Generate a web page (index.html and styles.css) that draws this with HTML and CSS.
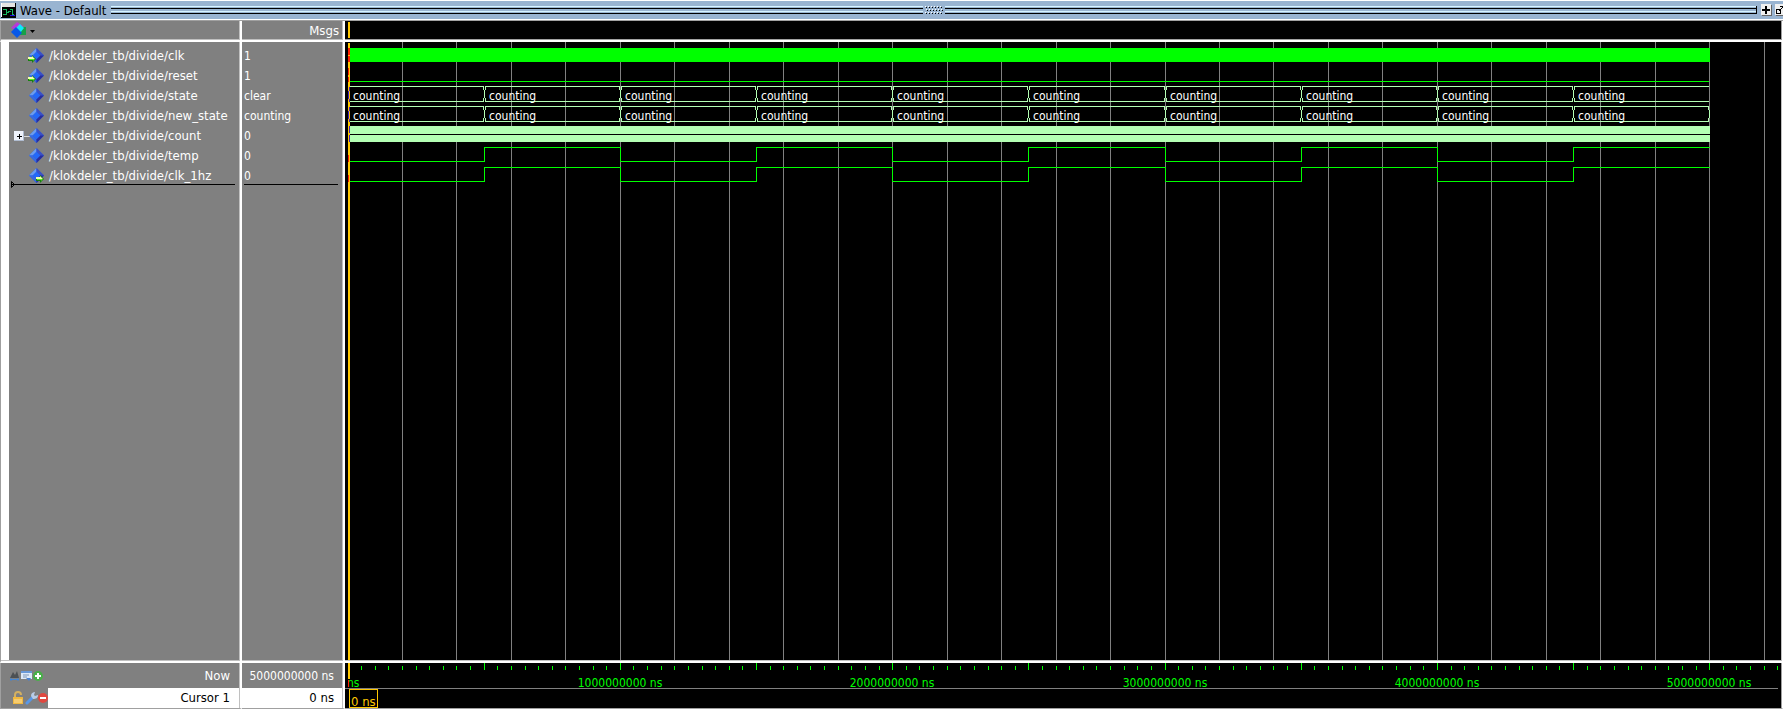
FILE: index.html
```html
<!DOCTYPE html>
<html lang="en">
<head>
<meta charset="utf-8">
<title>Wave - Default</title>
<link rel="stylesheet" href="styles.css">
</head>
<body>
<svg class="defs" width="0" height="0" aria-hidden="true">
  <symbol id="gem" viewBox="0 0 16 16">
    <path d="M8 0 0 8l8 8 8-8z" fill="#2458dc"/>
    <path d="M8 0 0 8h4l4-4z" fill="#6c9cf0"/>
    <path d="M8 0l8 8h-4L8 4z" fill="#3c50c4"/>
    <path d="M0 8l8 8v-4L4 8z" fill="#3a6ae0"/>
    <path d="M16 8l-8 8v-4l4-4z" fill="#2a2c9c"/>
    <path d="M8 4 4 8l4 4 4-4z" fill="#2468f8"/>
  </symbol>
  <symbol id="arrow" viewBox="0 0 8 8">
    <path d="M0 2h4V0l4 4-4 4V6H0z" fill="#188010"/>
    <path d="M0 2h4V1l3 3H0z" fill="#f4ffb0"/>
    <path d="M1 4h6L5 6V5H1z" fill="#58f020"/>
  </symbol>
</svg>

<main class="window">
  <header class="titlebar">
    <svg class="app-icon" width="15" height="15" viewBox="0 0 15 15" shape-rendering="crispEdges">
      <path d="M0 0h15v15H0z" fill="#000"/><path d="M0 0h14v4H0z" fill="#e4e4e4"/><path d="M0 0h1v14H0z" fill="#fff"/>
      <path d="M2 6.500h3v3h3M2 11.500h3v-2M9 6.500h2v5h2M7 8.500h3" fill="none" stroke="#18b860"/>
      <path d="M9 12.500h5" stroke="#2010e0"/>
    </svg>
    <h1 class="title">Wave - Default</h1>
    <div class="groove"></div>
    <svg class="grip" width="22" height="9" viewBox="0 0 22 9" shape-rendering="crispEdges">
      <path d="M2 .5h18M3 3.500h18M2 6.500h18" stroke="#fff" stroke-dasharray="1 2"/>
      <path d="M3 1.500h18M4 4.500h18M3 7.500h18" stroke="#000" stroke-dasharray="1 2"/>
    </svg>
    <div class="groove groove-end"></div>
    <button class="tool" aria-label="Maximize"><svg width="10" height="10" viewBox="0 0 10 10"><path d="M5 1v8M1 5h8" stroke="#000" stroke-width="2"/></svg></button>
    <button class="tool" aria-label="Undock"><svg width="10" height="10" viewBox="0 0 10 10" shape-rendering="crispEdges"><path d="M1.500 4.500h4v4h-4zM4 6l4-4M5 1.500h4v4" fill="none" stroke="#000"/></svg></button>
  </header>

  <section class="names-head">
    <button class="menu" aria-label="Signal options">
      <svg width="27" height="17" viewBox="0 0 27 17">
        <path d="M1 6 7 0l6 4-3 5z" fill="#b838d8"/><path d="M8 5h8v8H8z" fill="#18a048"/>
        <path d="M10 2l4 4-4 5-5-4z" fill="#10e8f8"/><path d="M6 5l6 6-5 5-6-6z" fill="#0858e8"/>
        <path d="M20 8h5l-2.500 3z" fill="#000"/>
      </svg>
    </button>
  </section>
  <section class="values-head">Msgs</section>
  <section class="wave-head"><i class="cursor-mark"></i></section>

  <section class="names">
    <ul class="list">
      <li class="signal"><svg class="gem"><use href="#gem" x="1" y="0" width="15" height="15"/><use href="#arrow" x="0" y="7" width="8" height="8"/></svg>/klokdeler_tb/divide/clk</li>
      <li class="signal"><svg class="gem"><use href="#gem" x="1" y="0" width="15" height="15"/><use href="#arrow" x="0" y="7" width="8" height="8"/></svg>/klokdeler_tb/divide/reset</li>
      <li class="signal"><svg class="gem"><use href="#gem" x="1" y="0" width="15" height="15"/></svg>/klokdeler_tb/divide/state</li>
      <li class="signal"><svg class="gem"><use href="#gem" x="1" y="0" width="15" height="15"/></svg>/klokdeler_tb/divide/new_state</li>
      <li class="signal"><button class="expand" aria-label="Expand count"><svg width="16" height="10" viewBox="0 0 16 10" shape-rendering="crispEdges"><path d="M0 0h10v10H0z" fill="#eef2fa"/><path d="M0 9.500h10M9.500 0v10" stroke="#b0bcd0"/><path d="M3 5.500h5M5.500 3v5" stroke="#000"/><path d="M10 5.500h6" stroke="#d8d8d8"/></svg></button><svg class="gem"><use href="#gem" x="1" y="0" width="15" height="15"/></svg>/klokdeler_tb/divide/count</li>
      <li class="signal"><svg class="gem"><use href="#gem" x="1" y="0" width="15" height="15"/></svg>/klokdeler_tb/divide/temp</li>
      <li class="signal"><svg class="gem"><use href="#gem" x="1" y="0" width="15" height="15"/><use href="#arrow" x="8" y="7" width="8" height="8"/></svg>/klokdeler_tb/divide/clk_1hz</li>
    </ul>
    <div class="insert"><svg width="4" height="7" viewBox="0 0 4 7"><path d="M.5.5v6l3-3z" fill="none" stroke="#000"/></svg></div>
  </section>
  <section class="values">
    <ul class="list">
      <li>1</li><li>1</li><li>clear</li><li>counting</li><li>0</li><li>0</li><li>0</li>
    </ul>
    <div class="insert"></div>
  </section>
  <section class="wave"><svg id="wave" class="plot" role="img" aria-label="Waveforms"></svg></section>

  <section class="names-foot">
    <div class="foot-row">
      <svg width="36" height="12" viewBox="0 0 36 12">
        <path d="M1 8l3-6 2 3 2-4 2 7z" fill="#4c5054"/><path d="M1 9.500h9M2 8v3M9 8v3" stroke="#4484d0" fill="none"/>
        <path d="M12 1h11v8H12z" fill="#dce8f8"/><path d="M12 1h11v2H12z" fill="#6898d8"/><path d="M14 5h6M14 7h4" stroke="#8098b8"/><path d="M17 8h5l-2 3z" fill="#4880d0"/>
        <circle cx="29" cy="6" r="5" fill="#48b048"/><path d="M29 3v6M26 6h6" stroke="#fff" stroke-width="2"/>
      </svg>
      <span>Now</span>
    </div>
    <div class="foot-row cursor-row">
      <svg width="36" height="14" viewBox="0 0 36 14">
        <path d="M3 7V4a3 3 0 0 1 6 0" fill="none" stroke="#d4b060" stroke-width="2"/><path d="M1 6h10v7H1z" fill="#f0b840"/><path d="M2 9h8M2 11h8" stroke="#fce0a0"/>
        <path d="M15 12l6-6" stroke="#5898e8" stroke-width="3" stroke-linecap="round"/><path d="M19 5c0-3 2-4 4-4l-1 3 1 1 3-1c0 3-2 4-5 4z" fill="#b8cce8"/>
        <circle cx="31" cy="7" r="5" fill="#e04840"/><path d="M28 7h6" stroke="#fff" stroke-width="2"/>
      </svg>
      <span class="cursor-name">Cursor 1</span>
    </div>
  </section>
  <section class="values-foot">
    <div class="foot-row now-value">5000000000 ns</div>
    <div class="foot-row cursor-value">0 ns</div>
  </section>
  <section class="wave-foot"><svg id="ruler" class="plot" role="img" aria-label="Time ruler"></svg></section>
</main>
<script src="wave.js"></script>
</body>
</html>
```
FILE: styles.css
```css
* { box-sizing: border-box; }

body {
  margin: 0;
  background: #fff;
  color: #fff;
  font: 12px/20px "DejaVu Sans Condensed", "DejaVu Sans", sans-serif;
  overflow: hidden;
}

.defs { position: absolute; }

.window {
  display: grid;
  grid-template: 21px 21px 1fr 46px / 242px 103px 1fr;
  height: 100vh;
}

.titlebar {
  grid-column: 1 / -1;
  display: flex;
  align-items: flex-start;
  padding: 2px 0 0 1px;
  min-width: 0;
  overflow: hidden;
  background: #99b4d1;
  border-top: 1px solid #fff;
  border-bottom: 1px solid #a0a0a0;
  box-shadow: inset 0 -1px #fff;
  color: #000;
}

.app-icon, .tool, .grip { flex: none; }

.title {
  margin: -2px 5px 0 4px;
  font-size: 13px;
  font-weight: normal;
  line-height: 20px;
  white-space: nowrap;
}

.groove {
  flex: 812 1 0;
  height: 8px;
  margin-top: 3px;
  background: linear-gradient(#d7f4ff 0 1px, #99b4d1 1px 2px, #000 2px 3px, #99b4d1 3px 5px, #d7f4ff 5px 6px, #99b4d1 6px 7px, #000 7px 8px);
}

.groove-end { flex-grow: 811; border-right: 1px solid #000; }
.grip { margin-top: 3px; }

.tool {
  width: 10px;
  height: 11px;
  margin-left: 4px;
  padding: 0;
  border: 0;
  background: #f0f0f0;
  box-shadow: 1px 1px #666;
  line-height: 0;
}
.tool:first-of-type { margin-top: 1px; }
.tool:last-of-type { margin: 1px -2px 0 4px; }

.names-head, .values-head, .names, .values, .names-foot, .values-foot {
  background: #808080;
  border-right: 2px solid #fff;
  box-shadow: inset -1px 0 #c0c0c0;
}

.names-head, .names, .names-foot { border-left: 1px solid #a0a0a0; }

.names-head, .values-head, .wave-head { border-bottom: 2px solid #fff; box-shadow: inset -1px -1px #c0c0c0; }

.values-head { padding-right: 4px; font-size: 13px; line-height: 20px; text-align: right; }

.menu { padding: 1px 0 0 9px; border: 0; background: none; line-height: 0; }

.wave-head, .wave, .wave-foot {
  min-width: 0;
  background: #000;
  border-right: 1px solid #fff;
  box-shadow: inset -1px 0 #a0a0a0;
}

.wave-head { padding: 1px 3px; box-shadow: inset -1px -1px #a0a0a0; }
.cursor-mark { display: block; width: 2px; height: 16px; background: #ffc800; }

.names, .values, .wave { min-height: 0; border-bottom: 2px solid #fff; box-shadow: inset -1px -1px #c0c0c0; }
.wave, .wave-foot { overflow: hidden; padding-right: 1px; }
.wave { padding-bottom: 1px; }

.names { padding-left: 8px; background: linear-gradient(90deg, #fff 8px, #808080 8px); }
.values { padding-left: 2px; }

.list { margin: 0 0 -2px; padding: 4px 0 0; list-style: none; }
.list li { height: 20px; white-space: nowrap; }

.list .signal { display: flex; align-items: center; padding-left: 19px; font-size: 13px; }
.gem { flex: none; width: 17px; height: 16px; margin-right: 4px; }
.expand { width: 16px; height: 10px; margin-left: -14px; margin-right: -2px; padding: 0; border: 0; background: none; line-height: 0; }

.insert {
  display: flex;
  align-items: center;
  height: 1px;
  margin: 0 5px 0 2px;
  background: #000;
}
.values .insert { margin-left: 0; }

.names-foot, .values-foot { border-bottom: 1px solid #a0a0a0; }

.foot-row {
  display: flex;
  align-items: center;
  justify-content: space-between;
  height: 25px;
  padding: 1px 10px 0 8px;
  font-size: 13px;
}

.cursor-row { height: 20px; padding: 0 1px 0 11px; }
.cursor-name { flex: 1; padding-right: 9px; background: #fff; color: #000; line-height: 20px; text-align: right; }
.values-foot .foot-row { justify-content: flex-end; padding: 1px 9px 0 0; }
.values-foot .now-value { font-size: 12px; }
.values-foot .cursor-value { height: 20px; margin-right: 1px; padding: 0 8px 0 0; background: #fff; color: #000; }
.wave-foot { border-bottom: 1px solid #a0a0a0; }

.plot { display: block; width: 100%; height: 100%; shape-rendering: crispEdges; fill: none; }
.plot text { font-size: 12px; fill: #fff; }
.grid { stroke: #808080; }
.gap { stroke: #000; }
.bit { stroke: #00ff00; }
.bus { stroke: #b4ffb4; }
.fill-bit { fill: #00ff00; }
.fill-bus { fill: #b4ffb4; }
.cursor { fill: #ffc800; }
.edge-bit { stroke: #ff2000; }
.edge-bus { stroke: #4020c0; }
.plot .tick-label { fill: #00ff00; text-anchor: middle; }
.cursor-box { fill: #000; stroke: #ffc800; }
.plot .cursor-text { font-size: 13px; fill: #ffc800; }
```
FILE: wave.js
```js
const NS = "http://www.w3.org/2000/svg";
const ORIGIN = 3;      // x of time 0
const STEPS = 10;      // half-second periods in the run

function add(parent, tag, attrs, text) {
  const el = document.createElementNS(NS, tag);
  for (const key in attrs) el.setAttribute(key, attrs[key]);
  if (text) el.textContent = text;
  parent.append(el);
}

function drawWave(svg, span) {
  const at = step => ORIGIN + Math.floor(step * span / STEPS);
  const end = at(STEPS);
  const path = (cls, d) => add(svg, "path", { class: cls, d });

  for (let i = 1; i <= 26; i++) {
    const x = at(i * 0.4) + 0.5;
    path("grid", `M${x} 0V2000`);
  }
  add(svg, "rect", { class: "cursor", x: ORIGIN, y: 1, width: 2, height: 2000 });

  // clk and count change too often to resolve, so they are solid bands
  add(svg, "rect", { class: "fill-bit", x: 5, y: 6, width: end - 4, height: 14 });
  add(svg, "rect", { class: "fill-bus", x: 5, y: 84, width: end - 4, height: 16 });
  path("gap", `M5 92.5H${end + 1}`);
  path("bit", `M5 39.5H${end}`);

  for (const [y, closed] of [[44, false], [64, true]]) {
    for (let i = 0; i < STEPS; i++) {
      const a = at(i) + (i ? 1 : 2);
      const b = at(i + 1);
      path("bus", `M${a} ${y + 0.5}H${b}M${a} ${y + 15.5}H${b}`);
      add(svg, "text", { x: at(i) + 5, y: y + 14 }, "counting");
      if (i < STEPS - 1 || closed) {
        path("bus", `M${b - 0.5} ${y}v4m0 8v4M${b + 0.5} ${y + 4}v8`);
        if (i < STEPS - 1) path("bus", `M${b + 1.5} ${y}v4m0 8v4`);
      }
    }
  }

  for (const y of [105, 125]) {
    let d = `M5 ${y + 14.5}`;
    for (let i = 1; i <= STEPS; i++) {
      d += `H${at(i) + 0.5}`;
      if (i < STEPS) d += `V${y + (i % 2 ? 0.5 : 14.5)}`;
    }
    path("bit", d);
  }

  path("edge-bit", "M3.500 6v7m0 1v6M4.500 6v7m0 1v6M3.500 26v7m0 2v5M3.500 113v7M3.500 133v7");
  path("edge-bus", "M3.500 49v8M4.500 45v4m0 8v3M3.500 69v8M4.500 65v4m0 8v3M4.500 84v7m0 2v7");
}

function drawRuler(svg, span, width) {
  const at = step => ORIGIN + Math.floor(step * span / STEPS);
  let major = "", minor = "";
  for (let i = 1; at(i / 10) < width; i++) {
    const x = at(i / 10) + 0.5;
    if (i % 10) minor += `M${x} 3v4`; else major += `M${x} 0v7`;
  }
  add(svg, "path", { class: "bit", d: major + minor });
  for (let s = 0; s <= 5; s++) {
    add(svg, "text", { class: "tick-label", x: at(s * 2), y: 24 }, s ? s + "000000000 ns" : "0 ns");
  }
  // time before 0 is not shown
  add(svg, "rect", { x: 0, y: 8, width: ORIGIN, height: 20, fill: "#000" });
  add(svg, "path", { class: "grid", d: `M0 25.5H${width - 3}` });
  add(svg, "rect", { class: "cursor", x: ORIGIN, y: 0, width: 2, height: 16 });
  add(svg, "path", { class: "edge-bit", d: "M3.500 17v7" });
  add(svg, "rect", { class: "cursor-box", x: 4.5, y: 26.5, width: 28, height: 18 });
  add(svg, "text", { class: "cursor-text", x: 6, y: 43 }, "0 ns");
}

function draw() {
  const wave = document.getElementById("wave");
  const ruler = document.getElementById("ruler");
  const width = Math.round(wave.getBoundingClientRect().width);
  const span = width * 0.9483;
  wave.replaceChildren();
  ruler.replaceChildren();
  drawWave(wave, span);
  drawRuler(ruler, span, width);
}

draw();
addEventListener("resize", draw);
```
